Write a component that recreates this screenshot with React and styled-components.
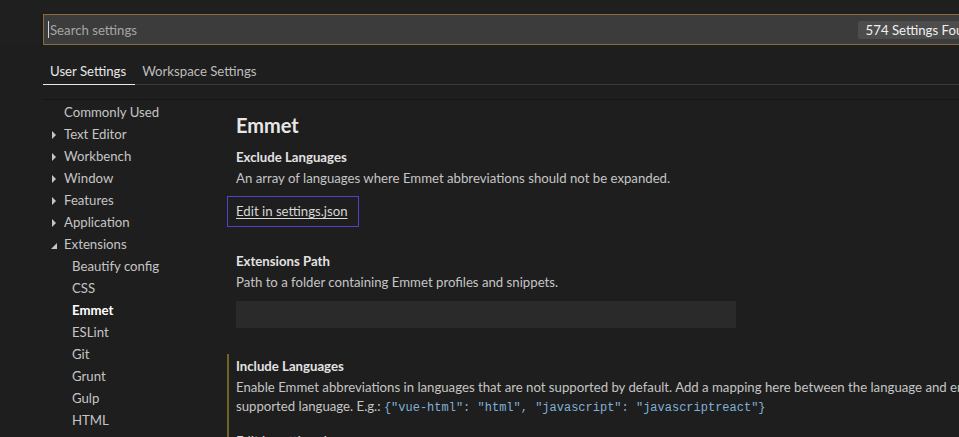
import React from "react";
import styled, { createGlobalStyle } from "styled-components";

const GlobalStyle = createGlobalStyle`
    body{
        margin: 0;
        background-color: #1e1e1e;
        font-family: "Lato", "Noto Sans", sans-serif;
        font-size: 13.2px;
        color: #c5c5c5;
        overflow: hidden;
    }
`

const Page = styled.div`
    width: 959px;
    height: 437px;
    overflow: hidden;
    background-color: #1e1e1e;
`

// header with search box
const Header = styled.header`
    background-color: #1f1f20;
    padding: 14px 0 0 43px;
`
const SearchBox = styled.div`
    align-items: center;
    background-color: #3c3c3c;
    border: 1px solid #8a6c3e;
    box-sizing: border-box;
    display: flex;
    height: 31px;
    margin-right: -80px;
    padding: 0 52px 0 4px;
    box-shadow: 0 2px 3px rgba(0,0,0,0.45);
`
const Caret = styled.span`
    background-color: #d4d4d4;
    height: 17px;
    width: 1px;
`
const Placeholder = styled.span`
    color: #a6a6a6;
    flex: 1;
    margin-left: 1px;
`
const Badge = styled.span`
    background-color: #4d4d4d;
    border-radius: 2px;
    color: #f0f0f0;
    padding: 0 8px;
    line-height: 18px;
    white-space: nowrap;
`

// tabs
const TabBar = styled.nav`
    background-color: #1e1e1e;
    border-bottom: 1px solid #3a3a3a;
    display: flex;
    margin-left: 43px;
    padding-top: 13px;
`
const Tab = styled.div`
    border-bottom: 1px solid ${p => p.$active ? "#e8e8e8" : "transparent"};
    color: ${p => p.$active ? "#e8e8e8" : "#bdbdbd"};
    line-height: 26px;
    margin-bottom: -1px;
    padding: 0 9px 0 7px;
`
const Spacer = styled.div`
    border-bottom: 1px solid #141414;
    height: 14px;
    margin-left: 43px;
`

// body
const Body = styled.div`
    display: grid;
    grid-template-columns: 193px 1fr;
    padding: 1px 0 0 43px;
`
const Toc = styled.ul`
    list-style: none;
    margin: 0;
    padding: 0;
`
const TocItem = styled.li`
    align-items: center;
    color: ${p => p.$active ? "#ffffff" : "#c5c5c5"};
    display: flex;
    font-weight: ${p => p.$active ? 700 : 400};
    height: 22px;
    padding-left: ${p => p.$child ? 29 : 8}px;
    svg{
        margin-right: 7px;
        width: 6px;
    }
`
const ArrowSlot = styled.span`
    display: inline-block;
    width: 13px;
`

const Content = styled.main`
    padding-top: 11px;
`
const Heading = styled.h2`
    color: #e7e7e7;
    font-size: 20px;
    font-weight: 700;
    line-height: 26px;
    margin: 0 0 10px;
`
const Setting = styled.section`
    border-left: 2px solid ${p => p.$modified ? "#6e6426" : "transparent"};
    margin-left: -9px;
    padding: ${p => p.$top || 0}px 0 0 7px;
    margin-bottom: ${p => p.$gap || 0}px;
`
const Title = styled.div`
    color: #e2e2e2;
    font-weight: 700;
    line-height: 19px;
`
const Description = styled.div`
    color: #c5c5c5;
    line-height: 19px;
    margin-top: 2px;
    white-space: nowrap;
`
const Code = styled.code`
    color: #7fb0d8;
    font-family: "Liberation Mono", "DejaVu Sans Mono", monospace;
    font-size: 12px;
`
const LinkBox = styled.div`
    border: 1px solid ${p => p.$focused ? "#4f45c9" : "transparent"};
    display: inline-block;
    margin: 8px 0 0 -9px;
    padding: 5px 10px 5px 8px;
`
const Link = styled.a`
    color: #d7d7d7;
    line-height: 19px;
    text-decoration: underline;
    text-underline-offset: 2px;
`
const TextInput = styled.div`
    background-color: #2a2a2a;
    height: 27px;
    margin-top: 9px;
    width: 500px;
`

const Arrow = ({ open }) => open ? (
    <svg viewBox="0 0 6 6" height="6"><path d="M6 0 L6 6 L0 6 Z" fill="#c5c5c5" /></svg>
) : (
    <svg viewBox="0 0 6 8" height="8"><path d="M1 0 L5 4 L1 8 Z" fill="#c5c5c5" /></svg>
)

const tocItems = [
    { label: "Commonly Used" },
    { label: "Text Editor", arrow: true },
    { label: "Workbench", arrow: true },
    { label: "Window", arrow: true },
    { label: "Features", arrow: true },
    { label: "Application", arrow: true },
    { label: "Extensions", arrow: true, open: true },
    { label: "Beautify config", child: true },
    { label: "CSS", child: true },
    { label: "Emmet", child: true, active: true },
    { label: "ESLint", child: true },
    { label: "Git", child: true },
    { label: "Grunt", child: true },
    { label: "Gulp", child: true },
    { label: "HTML", child: true },
]

const App = () => {
    return(
        <Page>
            <GlobalStyle />
            <Header>
                <SearchBox>
                    <Caret />
                    <Placeholder>Search settings</Placeholder>
                    <Badge>574 Settings Found</Badge>
                </SearchBox>
            </Header>
            <TabBar>
                <Tab $active>User Settings</Tab>
                <Tab>Workspace Settings</Tab>
            </TabBar>
            <Spacer />
            <Body>
                <Toc>
                    {tocItems.map(item => (
                        <TocItem key={item.label} $child={item.child} $active={item.active}>
                            {!item.child && (
                                <ArrowSlot>{item.arrow && <Arrow open={item.open} />}</ArrowSlot>
                            )}
                            {item.label}
                        </TocItem>
                    ))}
                </Toc>
                <Content>
                    <Heading>Emmet</Heading>
                    <Setting $gap={25}>
                        <Title>Exclude Languages</Title>
                        <Description>An array of languages where Emmet abbreviations should not be expanded.</Description>
                        <LinkBox $focused><Link>Edit in settings.json</Link></LinkBox>
                    </Setting>
                    <Setting $gap={26}>
                        <Title>Extensions Path</Title>
                        <Description>Path to a folder containing Emmet profiles and snippets.</Description>
                        <TextInput />
                    </Setting>
                    <Setting $modified $top={3}>
                        <Title>Include Languages</Title>
                        <Description>
                            Enable Emmet abbreviations in languages that are not supported by default. Add a mapping here between the language and emmet
                            <br />
                            supported language. E.g.: <Code>{'{"vue-html": "html", "javascript": "javascriptreact"}'}</Code>
                        </Description>
                        <LinkBox><Link>Edit in settings.json</Link></LinkBox>
                    </Setting>
                </Content>
            </Body>
        </Page>
    )
}
export default App;
